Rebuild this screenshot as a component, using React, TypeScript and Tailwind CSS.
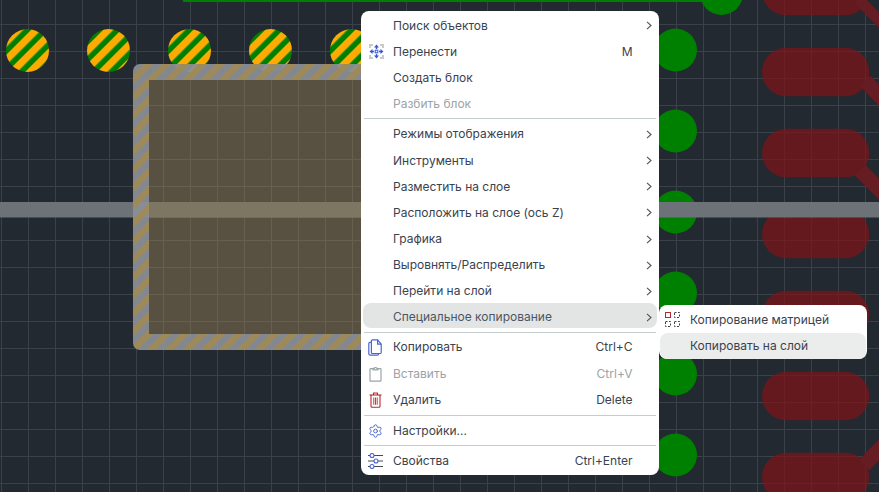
import React from "react";
import { Settings } from "lucide-react";

const xs = Array.from({ length: 33 }, (_, i) => 1.5 + 27 * i);
const ys = Array.from({ length: 19 }, (_, i) => -2.5 + 27 * i);

function Board() {
  return (
    <svg className="absolute inset-0" width={879} height={492} viewBox="0 0 879 492">
      <defs>
        <pattern id="hatch" width={12.73} height={12.73} patternUnits="userSpaceOnUse" patternTransform="rotate(45 27 50) translate(3 0)">
          <rect width={12.73} height={12.73} fill="#008000" />
          <rect width={7.2} height={12.73} fill="#ffaa00" />
        </pattern>
        <pattern id="edge" width={12.73} height={12.73} patternUnits="userSpaceOnUse" patternTransform="rotate(45 133 64) translate(1 0)">
          <rect width={12.73} height={12.73} fill="#8b9098" fillOpacity={0.92} />
          <rect width={6.36} height={12.73} fill="#a08a56" fillOpacity={0.92} />
        </pattern>
      </defs>
      {xs.map((x) => <line key={x} x1={x} x2={x} y1={0} y2={492} stroke="#3b4149" strokeWidth={1} />)}
      {ys.map((y) => <line key={y} x1={0} x2={879} y1={y} y2={y} stroke="#3b4149" strokeWidth={1} />)}
      <g fill="#7d1418" fillOpacity={0.72}>
        {[-9, 72, 153, 234, 315, 396, 477].map((c) => <rect key={c} x={762} y={c - 24.3} width={107.3} height={48.6} rx={24.3} />)}
      </g>
      <g stroke="#651c22" strokeWidth={15}>
        <line x1={858} y1={-1} x2={900} y2={41} strokeWidth={11} />
        <line x1={865} y1={81} x2={900} y2={116} />
        <line x1={860} y1={170} x2={900} y2={210} />
        <line x1={864} y1={465} x2={900} y2={429} />
      </g>
      <rect x={183} y={0} width={537} height={2} fill="#008000" />
      <circle cx={721.5} cy={-6.5} r={21.5} fill="#008000" />
      {[50, 131, 212, 293, 374, 455].map((y) => <circle key={y} cx={675.5} cy={y} r={21.5} fill="#008000" />)}
      {[27.5, 108.5, 189.5, 270.5, 351.5].map((x) => <circle key={x} cx={x} cy={50.5} r={21.5} fill="url(#hatch)" />)}
      <rect x={0} y={202} width={879} height={15.5} fill="#6d7279" />
      <path fillRule="evenodd" fill="url(#edge)" d="M140 64H626a7 7 0 0 1 7 7V343a7 7 0 0 1 -7 7H140a7 7 0 0 1 -7 -7V71a7 7 0 0 1 7 -7ZM149 80V334H617V80Z" />
      <rect x={149} y={80} width={468} height={254} fill="#b0945b" fillOpacity={0.38} />
      <rect x={149} y={202} width={468} height={15.5} fill="#7a7462" fillOpacity={0.85} />
    </svg>
  );
}

const MoveIcon = () => (
  <svg width={15} height={15} viewBox="0 0 15 15">
    <g fill="#2b2f36">
      {[[1, 1], [3, 1], [1, 3], [12, 1], [14, 1], [14, 3], [1, 12], [1, 14], [3, 14], [12, 14], [14, 14], [14, 12]].map(([x, y]) => (
        <rect key={`${x}-${y}`} x={x - 0.5} y={y - 0.5} width={1} height={1} />
      ))}
    </g>
    <g fill="#3558d8">
      <path d="M7.5 0.5 10 3.5H8.2V5H6.8V3.5H5Z" />
      <path d="M7.5 14.5 10 11.5H8.2V10H6.8V11.5H5Z" />
      <path d="M0.5 7.5 3.5 5V6.8H5V8.2H3.5V10Z" />
      <path d="M14.5 7.5 11.5 5V6.8H10V8.2H11.5V10Z" />
    </g>
    <rect x={6.2} y={6.2} width={2.6} height={2.6} fill="none" stroke="#3558d8" strokeWidth={1} />
  </svg>
);

const CopyIcon = () => (
  <svg className="mr-[2px]" width={14} height={17} viewBox="0 0 14 17" fill="none" stroke="#4a66d0" strokeWidth={1.2} strokeLinejoin="round">
    <path d="M3.4 2V13.4C3.4 14.1 3.9 14.5 4.5 14.5H12C12.6 14.5 13.2 14 13.2 13.4V5.2L9.6 0.8H4.6C3.9 0.8 3.4 1.3 3.4 2Z" />
    <path d="M9.6 0.8V5.2H13.2" />
    <path d="M3.4 3.4H2C1.3 3.4 0.8 3.9 0.8 4.6V14.8C0.8 15.6 1.4 16.2 2.2 16.2H9.4C10.2 16.2 10.8 15.6 10.8 14.6" />
  </svg>
);

const ClipIcon = () => (
  <svg className="mr-[1px]" width={13} height={16} viewBox="0 0 13 16" fill="none" stroke="#9aa5a5" strokeWidth={1.2} strokeLinejoin="round">
    <rect x={1} y={2.6} width={11} height={12.6} rx={0.8} />
    <path d="M4 3.8V2.4H5.2C5.4 1.2 7.6 1.2 7.8 2.4H9V3.8Z" fill="#fff" />
  </svg>
);

const TrashIcon = () => (
  <svg className="mr-[1px]" width={13} height={16} viewBox="0 0 13 16" fill="none" stroke="#b5282f" strokeWidth={1.1} strokeLinejoin="round">
    <path d="M0.5 3H12.5" />
    <path d="M4.5 3V1H8.5V3" />
    <path d="M2 3V14.2C2 14.8 2.4 15.2 3 15.2H10C10.6 15.2 11 14.8 11 14.2V3" />
    <path d="M4.8 5.5V12.8M6.5 5.5V12.8M8.2 5.5V12.8" strokeWidth={0.9} />
  </svg>
);

const SlidersIcon = () => (
  <svg className="mr-[1px]" width={15} height={16} viewBox="0 0 15 16" fill="none" strokeWidth={0.9}>
    <path d="M6 2.5H15M0 2.5H2M10 8H15M0 8H6M6 13.5H15M0 13.5H2" stroke="#2f3640" />
    <g stroke="#4a66d0" fill="#fff" strokeWidth={1.1}>
      <circle cx={4} cy={2.5} r={2} />
      <circle cx={8} cy={8} r={2} />
      <circle cx={4} cy={13.5} r={2} />
    </g>
  </svg>
);

const MatrixIcon = () => (
  <svg width={15} height={15} viewBox="0 0 15 15" fill="none" stroke="#3b424c" strokeWidth={1}>
    <rect x={0.5} y={0.5} width={5} height={5} stroke="#b5282f" />
    <rect x={9.5} y={0.5} width={5} height={5} strokeDasharray="2 1.5" />
    <rect x={0.5} y={9.5} width={5} height={5} strokeDasharray="2 1.5" />
    <rect x={9.5} y={9.5} width={5} height={5} strokeDasharray="2 1.5" />
  </svg>
);

const Chevron = () => (
  <svg width={6} height={9} viewBox="0 0 6 9" fill="none" stroke="#4b5560" strokeWidth={1.1}>
    <path d="M1 0.8 5 4.5 1 8.2" />
  </svg>
);

type Item = { label: string; icon?: React.ReactNode; hint?: string; sub?: boolean; off?: boolean; on?: boolean };

function Row({ label, icon, hint, sub, off, on }: Item) {
  return (
    <div className={`mx-[2px] flex items-center rounded-lg ${on ? "-mt-[1.2px] mb-[3.6px] h-[25px] bg-[#e3e5e5] pt-[2.4px] text-[#4c5662]" : off ? "h-[26.2px] text-[#9aa3a8]" : "h-[26.2px] text-[#39434f]"}`}>
      <span className="ml-[5px] mr-[9px] flex w-[16px] justify-center">{icon}</span>
      <span>{label}</span>
      {hint && <span className="ml-auto">{hint}</span>}
      <span className={`flex w-[24.5px] pl-[13.5px] ${hint ? "" : "ml-auto"}`}>{sub && <Chevron />}</span>
    </div>
  );
}

const sepClass = [
  "",
  "mt-[1px] mb-[2px]",
  "mt-[1px] mb-[1.4px]",
  "mt-[1.6px] mb-[2px]",
  "mt-[1.6px] mb-[2px]",
];

const groups: Item[][] = [
  [
    { label: "Поиск объектов", sub: true },
    { label: "Перенести", icon: <MoveIcon />, hint: "M" },
    { label: "Создать блок" },
    { label: "Разбить блок", off: true },
  ],
  [
    { label: "Режимы отображения", sub: true },
    { label: "Инструменты", sub: true },
    { label: "Разместить на слое", sub: true },
    { label: "Расположить на слое (ось Z)", sub: true },
    { label: "Графика", sub: true },
    { label: "Выровнять/Распределить", sub: true },
    { label: "Перейти на слой", sub: true },
    { label: "Специальное копирование", sub: true, on: true },
  ],
  [
    { label: "Копировать", icon: <CopyIcon />, hint: "Ctrl+C" },
    { label: "Вставить", icon: <ClipIcon />, hint: "Ctrl+V", off: true },
    { label: "Удалить", icon: <TrashIcon />, hint: "Delete" },
  ],
  [{ label: "Настройки...", icon: <Settings className="mr-[1px]" size={16} strokeWidth={1.5} color="#4a66d0" /> }],
  [{ label: "Свойства", icon: <SlidersIcon />, hint: "Ctrl+Enter" }],
];

export default function App() {
  return (
    <div className="relative h-[492px] w-[879px] overflow-hidden bg-[#222931] font-['Inter',sans-serif] text-[12px]">
      <Board />
      <div className="absolute left-[361px] top-[11px] w-[298px] rounded-lg bg-white pb-[0.5px] pt-[1.5px]">
        {groups.map((g, i) => (
          <React.Fragment key={i}>
            {i > 0 && <div className={`mx-[3px] h-px bg-[#c5cccc] ${sepClass[i]}`} />}
            {g.map((it) => <Row key={it.label} {...it} />)}
          </React.Fragment>
        ))}
      </div>
      <div className="absolute left-[659px] top-[305px] w-[208px] rounded-lg bg-white px-[1px] pb-[0.5px] pt-[1.5px] text-[#39434f]">
        <div className="flex h-[26px] items-center">
          <span className="ml-[5px] mr-[10px] flex w-[15px] justify-center"><MatrixIcon /></span>
          <span>Копирование матрицей</span>
        </div>
        <div className="flex h-[26px] items-center rounded-lg bg-[#ebecec] pl-[30px]">Копировать на слой</div>
      </div>
    </div>
  );
}
